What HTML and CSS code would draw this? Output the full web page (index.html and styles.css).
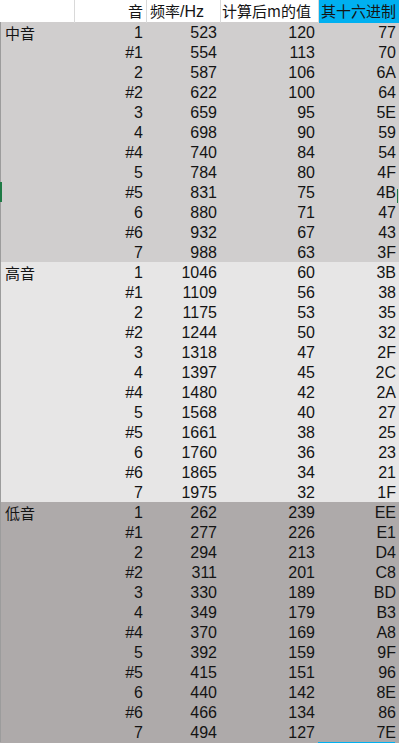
FILE: index.html
```html
<!DOCTYPE html>
<html lang="zh">
<head>
<meta charset="utf-8">
<link rel="stylesheet" href="styles.css">
<title>音高表</title>
</head>
<body>
<div class="sheet">
  <div class="row head">
    <div class="cell a"></div>
    <div class="cell b num zh">音</div>
    <div class="cell c txt"><span class="zh">频率</span>/Hz</div>
    <div class="cell d txt zh">计算后m的值</div>
    <div class="cell e txt hl zh">其十六进制</div>
  </div>
  <div class="section mid" id="mid"></div>
  <div class="section high" id="high"></div>
  <div class="section low" id="low"></div>
  <div class="row tail"><div class="cell a"></div><div class="cell b"></div><div class="cell c"></div><div class="cell d"></div><div class="cell e mark"></div></div>
</div>
<script src="app.js"></script>
</body>
</html>
```
FILE: app.js
```js
const notes = ["1","#1","2","#2","3","4","#4","5","#5","6","#6","7"];
const data = {
  mid: { label: "中音", f: [523,554,587,622,659,698,740,784,831,880,932,988], m: [120,113,106,100,95,90,84,80,75,71,67,63],
    h: ["77","70","6A","64","5E","59","54","4F","4B","47","43","3F"] },
  high: { label: "高音", f: [1046,1109,1175,1244,1318,1397,1480,1568,1661,1760,1865,1975], m: [60,56,53,50,47,45,42,40,38,36,34,32],
    h: ["3B","38","35","32","2F","2C","2A","27","25","23","21","1F"] },
  low: { label: "低音", f: [262,277,294,311,330,349,370,392,415,440,466,494], m: [239,226,213,201,189,179,169,159,151,142,134,127],
    h: ["EE","E1","D4","C8","BD","B3","A8","9F","96","8E","86","7E"] }
};
for (const key of Object.keys(data)) {
  const sec = document.getElementById(key);
  const d = data[key];
  notes.forEach((n, i) => {
    const row = document.createElement("div");
    row.className = "row" + (key === "mid" && n === "#5" ? " active" : "");
    const cells = [
      ["a txt zh", i === 0 ? d.label : ""],
      ["b num", n],
      ["c num", String(d.f[i])],
      ["d num", String(d.m[i])],
      ["e num", d.h[i]]
    ];
    for (const [cls, t] of cells) {
      const c = document.createElement("div");
      c.className = "cell " + cls;
      c.textContent = t;
      row.appendChild(c);
    }
    sec.appendChild(row);
  });
}
```
FILE: styles.css
```css
html, body {
  margin: 0;
  padding: 0;
  background: #ffffff;
}
body {
  font-family: "Liberation Sans", "Noto Sans CJK SC", sans-serif;
  font-size: 16px;
  color: #141414;
}
.zh {
  font-family: "Noto Sans CJK SC", "Liberation Sans", sans-serif;
  font-size: 15px;
}
.sheet {
  width: 399px;
  height: 743px;
  overflow: hidden;
}
.row {
  display: grid;
  grid-template-columns: 74px 72px 74px 98px 81px;
  height: 20px;
  line-height: 22px;
  position: relative;
}
.cell {
  white-space: nowrap;
  overflow: visible;
}
.num {
  text-align: right;
  padding-right: 3px;
}
.txt {
  text-align: left;
  padding-left: 3px;
}
.head {
  height: 22px;
  background: #ffffff;
  line-height: 22px;
}
.head .cell + .cell {
  border-left: 1px solid #d9d9d9;
}
.head .d {
  padding-left: 1px;
}
.head .hl {
  background: #00b0f0;
  border-left: none;
  padding-left: 2px;
}
.section .row {
  border-left: 1px solid #9c9c9c;
  grid-template-columns: 73px 72px 74px 98px 81px;
}
.section .a {
  padding-left: 4px;
}
.mid { background: #d0cece; }
.high { background: #e7e6e6; }
.low { background: #aeaaaa; }
.tail {
  height: 1px;
  background: #aeaaaa;
}
.tail .mark {
  background: #00b0f0;
  margin-right: 4px;
}
.active::before {
  content: "";
  position: absolute;
  left: -1px;
  top: 0;
  width: 2px;
  height: 20px;
  background: #1e7a45;
}
.active::after {
  content: "";
  position: absolute;
  right: 1px;
  top: 7px;
  width: 1px;
  height: 14px;
  background: #1e7a45;
}
```
